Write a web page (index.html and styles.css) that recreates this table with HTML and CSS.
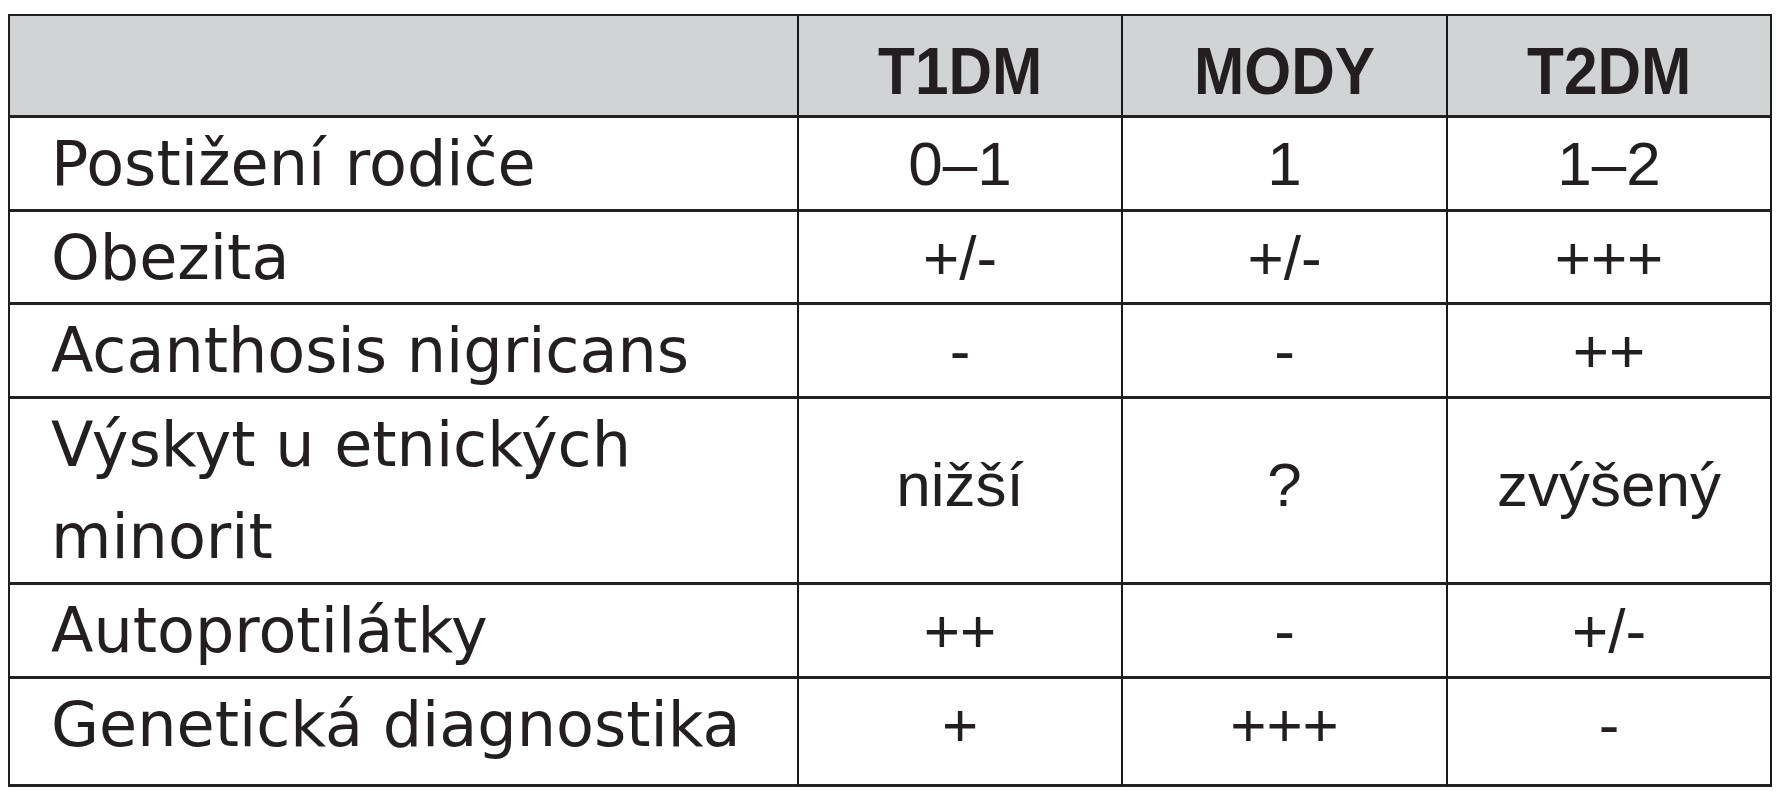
FILE: index.html
```html
<!DOCTYPE html>
<html lang="cs">
<head>
<meta charset="utf-8">
<title>T1DM, MODY, T2DM</title>
<link rel="stylesheet" href="styles.css">
</head>
<body>
<div class="page">
  <div class="tbl" role="table">
    <div class="row head" role="row">
      <div class="cell hd" role="columnheader"></div>
      <div class="cell hd" role="columnheader"><span>T1DM</span></div>
      <div class="cell hd" role="columnheader"><span>MODY</span></div>
      <div class="cell hd" role="columnheader"><span>T2DM</span></div>
    </div>
    <div class="row" role="row">
      <div class="cell label" role="rowheader">Postižení rodiče</div>
      <div class="cell val" role="cell">0–1</div>
      <div class="cell val" role="cell">1</div>
      <div class="cell val" role="cell">1–2</div>
    </div>
    <div class="row" role="row">
      <div class="cell label" role="rowheader">Obezita</div>
      <div class="cell val" role="cell">+/-</div>
      <div class="cell val" role="cell">+/-</div>
      <div class="cell val" role="cell">+++</div>
    </div>
    <div class="row" role="row">
      <div class="cell label" role="rowheader">Acanthosis nigricans</div>
      <div class="cell val" role="cell">-</div>
      <div class="cell val" role="cell">-</div>
      <div class="cell val" role="cell">++</div>
    </div>
    <div class="row tall" role="row">
      <div class="cell label" role="rowheader">Výskyt u etnických<br>minorit</div>
      <div class="cell val" role="cell">nižší</div>
      <div class="cell val" role="cell">?</div>
      <div class="cell val" role="cell">zvýšený</div>
    </div>
    <div class="row" role="row">
      <div class="cell label" role="rowheader">Autoprotilátky</div>
      <div class="cell val" role="cell">++</div>
      <div class="cell val" role="cell">-</div>
      <div class="cell val" role="cell">+/-</div>
    </div>
    <div class="row" role="row">
      <div class="cell label" role="rowheader">Genetická diagnostika</div>
      <div class="cell val" role="cell">+</div>
      <div class="cell val" role="cell">+++</div>
      <div class="cell val" role="cell">-</div>
    </div>
  </div>
</div>
</body>
</html>
```

FILE: styles.css
```css
html, body {
  margin: 0;
  padding: 0;
  background: #ffffff;
}

.page {
  padding: 14px 0 0 8px;
}

.tbl {
  display: grid;
  grid-template-columns: 789px 324px 325px 324px;
  grid-template-rows: 102px 94px 93px 94px 186px 94px 108px;
  width: max-content;
  border-top: 2px solid #1f1f1f;
  border-left: 2px solid #1f1f1f;
  color: #231f20;
}

.row {
  display: contents;
}

.cell {
  box-sizing: border-box;
  border-right: 2px solid #1a1a1a;
  border-bottom: 3px solid #222222;
  white-space: nowrap;
}

.hd {
  background: #d1d3d4;
  text-align: center;
  padding-top: 17px;
  font-family: "Liberation Sans", Arial, sans-serif;
  font-weight: bold;
  font-size: 67px;
  line-height: 75px;
}

.hd span {
  display: inline-block;
  transform: scaleX(0.9);
}

.label {
  font-family: "DejaVu Sans", sans-serif;
  font-size: 62px;
  line-height: 92px;
  padding-left: 41px;
}

.val {
  font-family: "Liberation Sans", Arial, sans-serif;
  font-size: 62px;
  line-height: 92px;
  text-align: center;
}

.tall .val {
  padding-top: 40px;
}
```
